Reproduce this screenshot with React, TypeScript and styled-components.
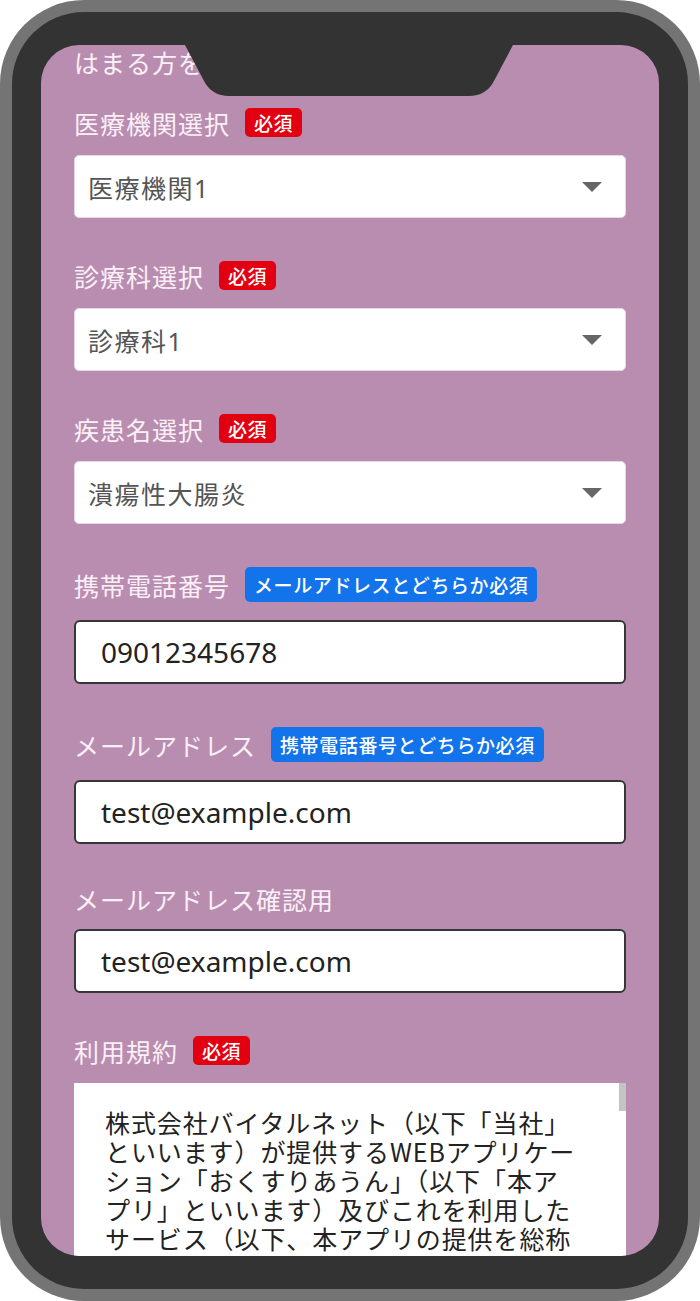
import styled, { createGlobalStyle } from "styled-components";

const GlobalStyle = createGlobalStyle`
  html, body {
    margin: 0;
    padding: 0;
    background: #ffffff;
  }
  body {
    font-family: "Noto Sans", "Noto Sans CJK JP", sans-serif;
  }
`;

const Phone = styled.div`
  box-sizing: border-box;
  width: 700px;
  height: 1301px;
  padding: 12px;
  border-radius: 84px;
  background: #747474;
`;

const Bezel = styled.div`
  box-sizing: border-box;
  height: 100%;
  padding: 33px 29px;
  border-radius: 72px;
  background: #333333;
`;

const Screen = styled.div`
  position: relative;
  box-sizing: border-box;
  height: 100%;
  padding: 0 33px;
  border-radius: 38px;
  background: #b98db0;
  overflow: hidden;
  display: flex;
  flex-direction: column;
`;

const Notch = styled.svg`
  position: absolute;
  top: 0;
  left: 144px;
  display: block;
`;

const Intro = styled.p`
  margin: 0 0 28px;
  font-family: "Noto Sans CJK JP", sans-serif;
  font-size: 25px;
  line-height: 35px;
  letter-spacing: 1px;
  color: #fbf0f7;
`;

const Field = styled.div`
  margin-bottom: 43px;
`;

const LabelRow = styled.div`
  display: flex;
  align-items: center;
  gap: 15px;
  margin-bottom: 18px;
`;

const Label = styled.span`
  font-family: "Noto Sans CJK JP", sans-serif;
  font-size: 25px;
  line-height: 24px;
  letter-spacing: 1px;
  color: #fbf0f7;
`;

const Badge = styled.span<{ $tone: "red" | "blue" }>`
  display: inline-flex;
  align-items: center;
  height: ${(p) => (p.$tone === "red" ? "29px" : "35px")};
  padding: 0 9px;
  border-radius: 5px;
  background: ${(p) => (p.$tone === "red" ? "#e20010" : "#1273ea")};
  color: #ffffff;
  font-family: "Noto Sans CJK JP", sans-serif;
  font-size: 19px;
  font-weight: 500;
  letter-spacing: 0.6px;
  white-space: nowrap;
`;

const Select = styled.div`
  box-sizing: border-box;
  display: flex;
  align-items: center;
  justify-content: space-between;
  height: 63px;
  padding: 0 23px 0 13px;
  border: 1px solid #e6d9e2;
  border-radius: 5px;
  background: #ffffff;
  color: #555555;
  font-family: "Noto Sans", "Noto Sans CJK JP", sans-serif;
  font-size: 25px;
  letter-spacing: 1.5px;
`;

const Caret = styled.span`
  width: 0;
  height: 0;
  border-left: 10px solid transparent;
  border-right: 10px solid transparent;
  border-top: 10px solid #666666;
`;

const Input = styled.div`
  box-sizing: border-box;
  display: flex;
  align-items: center;
  height: 64px;
  padding: 0 25px;
  border: 2px solid #363636;
  border-radius: 6px;
  background: #ffffff;
  color: #222222;
  font-family: "Noto Sans", sans-serif;
  font-size: 28px;
`;

const Terms = styled.div`
  position: relative;
  box-sizing: border-box;
  height: 320px;
  padding: 25px 20px 0 31px;
  background: #ffffff;
  color: #222222;
  font-family: "Noto Sans CJK JP", sans-serif;
  font-size: 25px;
  line-height: 29px;
  letter-spacing: 0.9px;
  white-space: pre-line;
`;

const ScrollThumb = styled.span`
  position: absolute;
  top: 0;
  right: 0;
  width: 7px;
  height: 28px;
  background: #c4c4c4;
`;

const terms = [
  "株式会社バイタルネット（以下「当社」",
  "といいます）が提供するWEBアプリケー",
  "ション「おくすりあうん」（以下「本ア",
  "プリ」といいます）及びこれを利用した",
  "サービス（以下、本アプリの提供を総称",
  "して「本サービス」といいます）は、お",
];

type Req = { tone: "red" | "blue"; text: string };

function FieldLabel({ label, req }: { label: string; req?: Req }) {
  return (
    <LabelRow>
      <Label>{label}</Label>
      {req && <Badge $tone={req.tone}>{req.text}</Badge>}
    </LabelRow>
  );
}

const required: Req = { tone: "red", text: "必須" };

export default function App() {
  return (
    <>
      <GlobalStyle />
      <Phone>
        <Bezel>
          <Screen>
            <Intro>はまる方を</Intro>

            <Field>
              <FieldLabel label="医療機関選択" req={required} />
              <Select>
                医療機関1
                <Caret />
              </Select>
            </Field>

            <Field>
              <FieldLabel label="診療科選択" req={required} />
              <Select>
                診療科1
                <Caret />
              </Select>
            </Field>

            <Field>
              <FieldLabel label="疾患名選択" req={required} />
              <Select>
                潰瘍性大腸炎
                <Caret />
              </Select>
            </Field>

            <Field>
              <FieldLabel label="携帯電話番号" req={{ tone: "blue", text: "メールアドレスとどちらか必須" }} />
              <Input>09012345678</Input>
            </Field>

            <Field>
              <FieldLabel label="メールアドレス" req={{ tone: "blue", text: "携帯電話番号とどちらか必須" }} />
              <Input>test@example.com</Input>
            </Field>

            <Field>
              <FieldLabel label="メールアドレス確認用" />
              <Input>test@example.com</Input>
            </Field>

            <Field>
              <FieldLabel label="利用規約" req={required} />
              <Terms>
                {terms.join("\n")}
                <ScrollThumb />
              </Terms>
            </Field>

            <Notch width="328" height="51" viewBox="0 0 328 51">
              <path d="M0 0 L19 36 Q27 51 44 51 L284 51 Q301 51 309 36 L328 0 Z" fill="#333333" />
            </Notch>
          </Screen>
        </Bezel>
      </Phone>
    </>
  );
}
